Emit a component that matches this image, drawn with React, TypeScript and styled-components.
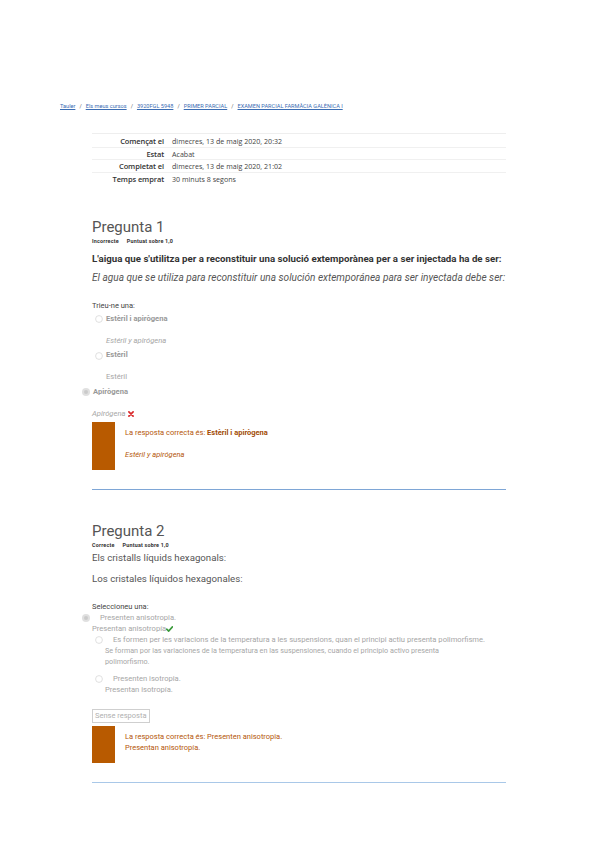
import React from 'react';
import styled, { createGlobalStyle } from 'styled-components';

const GlobalStyle = createGlobalStyle`
  html, body {
    margin: 0;
    padding: 0;
    background: #ffffff;
  }
  body {
    font-family: 'Roboto', 'Liberation Sans', sans-serif;
    color: #333;
  }
`;

interface OptionData {
  label: string;
  translation: string;
  italic: boolean;
}

const summary = [
  ['Començat el', 'dimecres, 13 de maig 2020, 20:32'],
  ['Estat', 'Acabat'],
  ['Completat el', 'dimecres, 13 de maig 2020, 21:02'],
  ['Temps emprat', '30 minuts 8 segons'],
];

const Radio: React.FC<{ checked?: boolean }> = ({ checked }) => (
  <RadioMark>
    <svg width="8" height="8" viewBox="0 0 8 8">
      {checked ? (
        <>
          <circle cx="4" cy="4" r="4" fill="#e0e0e0" />
          <circle cx="4" cy="4" r="2" fill="#cacaca" />
        </>
      ) : (
        <circle cx="4" cy="4" r="3.4" fill="#fff" stroke="#d8d8d8" strokeWidth="0.8" />
      )}
    </svg>
  </RadioMark>
);

const Cross = () => (
  <svg width="6" height="6" viewBox="0 0 10 10">
    <path d="M1.5 1.5 L8.5 8.5 M8.5 1.5 L1.5 8.5" stroke="#d9292b" strokeWidth="2.8" strokeLinecap="round" />
  </svg>
);

const Tick = () => (
  <svg width="7" height="6" viewBox="0 0 10 8">
    <path d="M1 4.3 L3.8 7 L9.2 1" stroke="#3a9a3a" strokeWidth="2.4" fill="none" strokeLinecap="round" />
  </svg>
);

const q1Options: OptionData[] = [
  { label: 'Estèril i apirògena', translation: 'Estéril y apirógena', italic: true },
  { label: 'Estèril', translation: 'Estéril', italic: false },
];

const App: React.FC = () => (
  <Page>
    <GlobalStyle />
    <Breadcrumb>
      <Crumb>Tauler</Crumb>
      <Sep>/</Sep>
      <Crumb>Els meus cursos</Crumb>
      <Sep>/</Sep>
      <Crumb>3920FGL 5948</Crumb>
      <Sep>/</Sep>
      <Crumb>PRIMER PARCIAL</Crumb>
      <Sep>/</Sep>
      <Crumb>EXAMEN PARCIAL FARMÀCIA GALÈNICA I</Crumb>
    </Breadcrumb>

    <Main>
      <Summary>
        {summary.map(([k, v]) => (
          <SummaryRow key={k}>
            <SummaryKey>{k}</SummaryKey>
            <SummaryValue>{v}</SummaryValue>
          </SummaryRow>
        ))}
      </Summary>

      <Question top={32.5}>
        <QTitle>Pregunta 1</QTitle>
        <QInfo>
          <span>Incorrecte</span>
          <span>Puntuat sobre 1,0</span>
        </QInfo>
        <QTextBold>L'aigua que s'utilitza per a reconstituir una solució extemporànea per a ser injectada ha de ser:</QTextBold>
        <QTextItalic>El agua que se utiliza para reconstituir una solución extemporánea para ser inyectada debe ser:</QTextItalic>

        <Prompt>Trieu-ne una:</Prompt>
        <OptionList>
          {q1Options.map(o => (
            <Q1Option key={o.label}>
              <OptionLine indent={3}>
                <Radio />
                <OptionBold>{o.label}</OptionBold>
              </OptionLine>
              <OptionTranslation indent={14} italic={o.italic}>
                {o.translation}
              </OptionTranslation>
            </Q1Option>
          ))}
          <Q1Option>
            <OptionLine indent={-10}>
              <Radio checked />
              <OptionBold>Apirògena</OptionBold>
            </OptionLine>
            <OptionTranslation indent={0} italic>
              Apirógena <Cross />
            </OptionTranslation>
          </Q1Option>
        </OptionList>

        <Feedback height={48}>
          <FeedbackBar />
          <FeedbackBody gap={12}>
            <FeedbackText>
              La resposta correcta és: <strong>Estèril i apirògena</strong>
            </FeedbackText>
            <FeedbackText italic>Estéril y apirógena</FeedbackText>
          </FeedbackBody>
        </Feedback>
      </Question>

      <Divider color="#7ea6d6" />

      <Question top={32}>
        <QTitle>Pregunta 2</QTitle>
        <QInfo>
          <span>Correcte</span>
          <span>Puntuat sobre 1,0</span>
        </QInfo>
        <QTextPlain first>Els cristalls líquids hexagonals:</QTextPlain>
        <QTextPlain>Los cristales líquidos hexagonales:</QTextPlain>

        <Prompt>Seleccioneu una:</Prompt>
        <Q2List>
          <Q2Option>
            <OptionLine indent={-10}>
              <Radio checked />
              <OptionPlain>Presenten anisotropia.</OptionPlain>
            </OptionLine>
            <Q2Translation indent={0}>
              Presentan anisotropía<Tick />
            </Q2Translation>
          </Q2Option>
          <Q2Option>
            <OptionLine indent={3}>
              <Radio />
              <OptionPlain>
                Es formen per les variacions de la temperatura a les suspensions, quan el principi actiu presenta polimorfisme.
              </OptionPlain>
            </OptionLine>
            <Q2Translation indent={13} narrow>
              Se forman por las variaciones de la temperatura en las suspensiones, cuando el principio activo presenta polimorfismo.
            </Q2Translation>
          </Q2Option>
          <Q2Option spaced>
            <OptionLine indent={3}>
              <Radio />
              <OptionPlain>Presenten isotropia.</OptionPlain>
            </OptionLine>
            <Q2Translation indent={13}>Presentan isotropía.</Q2Translation>
          </Q2Option>
        </Q2List>

        <ClearButton>Sense resposta</ClearButton>
        <Feedback height={37}>
          <FeedbackBar />
          <FeedbackBody gap={1}>
            <FeedbackText>La resposta correcta és: Presenten anisotropia.</FeedbackText>
            <FeedbackText>Presentan anisotropía.</FeedbackText>
          </FeedbackBody>
        </Feedback>
      </Question>

      <Divider color="#a9c8e8" />
    </Main>
  </Page>
);

export default App;

const Page = styled.div`
  width: 599px;
  min-height: 848px;
  padding-top: 101px;
  box-sizing: border-box;
`;

const Breadcrumb = styled.nav`
  display: flex;
  align-items: center;
  padding-left: 60px;
  font-size: 5.6px;
  line-height: 10px;
`;

const Crumb = styled.a`
  color: #3b6db3;
  text-decoration: underline;
`;

const Sep = styled.span`
  color: #666;
  margin: 0 4px;
`;

const Main = styled.main`
  margin-left: 92px;
  width: 414px;
  padding-top: 22px;
`;

const Summary = styled.div`
  display: flex;
  flex-direction: column;
  padding-top: 1.5px;
  border-top: 1px solid #eeeeee;
  font-family: 'Open Sans', 'Liberation Sans', sans-serif;
  font-size: 7.5px;
  color: #333;
`;

const SummaryRow = styled.div`
  display: grid;
  grid-template-columns: 72px 1fr;
  column-gap: 8px;
  box-sizing: border-box;
  height: 12.4px;
  align-items: center;
  border-bottom: 1px solid #f0f0f0;

  &:last-child {
    border-bottom: none;
  }
`;

const SummaryKey = styled.span`
  text-align: right;
  font-weight: 600;
  letter-spacing: -0.1px;
`;

const SummaryValue = styled.span`
  font-size: 7.1px;
  color: #444;
`;

const Question = styled.section<{ top: number }>`
  display: flex;
  flex-direction: column;
  padding-top: ${p => p.top}px;
`;

const QTitle = styled.h2`
  margin: 0;
  font-size: 15px;
  font-weight: 400;
  line-height: 18px;
  color: #555;
`;

const QInfo = styled.div`
  display: flex;
  gap: 8px;
  margin-top: 2px;
  font-size: 5.4px;
  font-weight: 700;
  color: #333;
  line-height: 7px;
  letter-spacing: 0.2px;
`;

const QTextBold = styled.p`
  margin: 7px 0 5px;
  font-size: 9.7px;
  font-weight: 700;
  color: #333;
  line-height: 14px;
`;

const QTextItalic = styled.p`
  margin: 0;
  font-size: 10.1px;
  font-style: italic;
  color: #555;
  line-height: 14px;
`;

const QTextPlain = styled.p<{ first?: boolean }>`
  margin: ${p => (p.first ? '2px 0 7px' : '0')};
  font-size: 9.7px;
  color: #555;
  line-height: 14px;
`;

const Prompt = styled.div`
  margin-top: 16px;
  font-size: 7.5px;
  color: #444;
  line-height: 10px;
`;

const OptionList = styled.div`
  display: flex;
  flex-direction: column;
  margin-top: 3px;
`;

const Q1Option = styled.div`
  display: flex;
  flex-direction: column;
  gap: 12px;

  & + & {
    margin-top: 4.5px;
  }
`;

const OptionLine = styled.div<{ indent: number }>`
  display: flex;
  align-items: flex-start;
  margin-left: ${p => p.indent}px;
`;

const RadioMark = styled.span`
  display: inline-flex;
  flex: none;
  margin-top: 1.5px;
  margin-right: 3px;
`;

const OptionBold = styled.span`
  font-size: 7.6px;
  font-weight: 700;
  color: #999;
  line-height: 10px;
`;

const OptionPlain = styled.span`
  padding-left: 7px;
  font-size: 7.6px;
  color: #a6a6a6;
  line-height: 11px;
`;

const OptionTranslation = styled.div<{ indent: number; italic?: boolean }>`
  display: flex;
  align-items: center;
  gap: 3px;
  height: 10px;
  margin-left: ${p => p.indent}px;
  font-size: 7.6px;
  font-style: ${p => (p.italic ? 'italic' : 'normal')};
  color: #a6a6a6;
  line-height: 10px;
`;

const Q2List = styled.div`
  display: flex;
  flex-direction: column;
  margin-top: 0.5px;
`;

const Q2Option = styled.div<{ spaced?: boolean }>`
  display: flex;
  flex-direction: column;
  margin-top: ${p => (p.spaced ? '6px' : '0')};
`;

const Q2Translation = styled.div<{ indent: number; narrow?: boolean }>`
  margin-left: ${p => p.indent}px;
  max-width: ${p => (p.narrow ? '370px' : 'none')};
  font-size: ${p => (p.narrow ? '7.2px' : '7.6px')};
  color: #a6a6a6;
  line-height: 11px;

  svg {
    vertical-align: -1px;
  }
`;

const ClearButton = styled.button`
  align-self: flex-start;
  margin-top: 13.5px;
  padding: 0 2px;
  height: 14px;
  background: #fff;
  border: 1px solid #cfcfcf;
  font-family: 'Roboto', 'Liberation Sans', sans-serif;
  font-size: 7.5px;
  color: #b0b0b0;
`;

const Feedback = styled.div<{ height: number }>`
  display: flex;
  gap: 10px;
  margin-top: 3px;
  height: ${p => p.height}px;
`;

const FeedbackBar = styled.div`
  width: 23px;
  background: #b85a00;
`;

const FeedbackBody = styled.div<{ gap: number }>`
  display: flex;
  flex-direction: column;
  gap: ${p => p.gap}px;
  padding-top: 6px;
`;

const FeedbackText = styled.div<{ italic?: boolean }>`
  font-size: 7.5px;
  font-style: ${p => (p.italic ? 'italic' : 'normal')};
  color: #b4560a;
  line-height: 10px;

  strong {
    color: #a24c05;
  }
`;

const Divider = styled.hr<{ color: string }>`
  margin: 19px 0 0;
  border: none;
  border-top: 1px solid ${p => p.color};
`;
